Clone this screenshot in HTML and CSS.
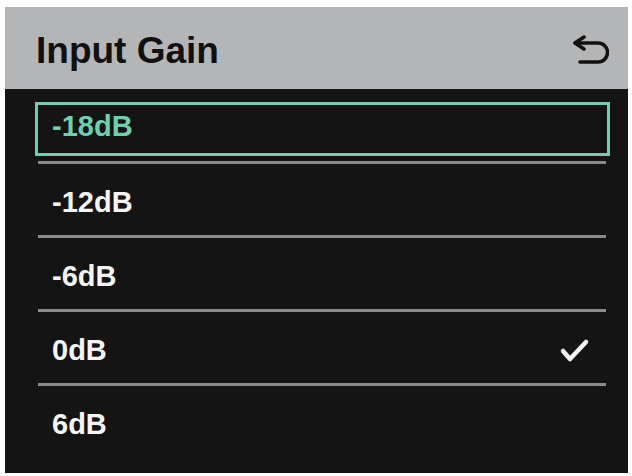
FILE: index.html
```html
<!DOCTYPE html>
<html lang="en">

<head>
    <meta charset="UTF-8">
    <meta name="viewport" content="width=device-width, initial-scale=1.0">
    <title>Input Gain</title>
    <link rel="stylesheet" href="styles.css">
</head>

<body>
    <div class="screen">
        <div class="header">
            <h1>Input Gain</h1>
            <svg class="back-icon" width="36" height="30" viewBox="0 0 36 30" fill="none" stroke="#111" stroke-width="3.5" stroke-linecap="round" stroke-linejoin="round">
                <path d="M11 3 L2 9 L11 15" />
                <path d="M2 9 H25 A9.5 9.5 0 0 1 25 28 H7" />
            </svg>
        </div>

        <div class="list">
            <div class="item selected">-18dB</div>
            <div class="divider"></div>
            <div class="item">-12dB</div>
            <div class="divider"></div>
            <div class="item">-6dB</div>
            <div class="divider"></div>
            <div class="item">0dB
                <svg class="check" width="32" height="26" viewBox="0 0 32 26" fill="none" stroke="#f2f2f2" stroke-width="4.5" stroke-linecap="round" stroke-linejoin="round">
                    <path d="M5 13 L12 21 L28 4" />
                </svg>
            </div>
            <div class="divider"></div>
            <div class="item">6dB</div>
        </div>
    </div>
</body>

</html>
```

FILE: styles.css
```css
* {
    margin: 0;
    padding: 0;
    box-sizing: border-box;
    font-family: 'Liberation Sans', Arial, sans-serif;
}

body {
    background-color: #ffffff;
    padding: 7px 4px 3px 5px;
}

.screen {
    width: 623px;
    height: 466px;
    background-color: #141414;
    display: flex;
    flex-direction: column;
    overflow: hidden;
}

.header {
    height: 82px;
    background-color: #b4b5b7;
    display: flex;
    align-items: center;
    justify-content: space-between;
    padding: 6px 19px 0 31px;
}

.header h1 {
    font-size: 37px;
    font-weight: bold;
    color: #111111;
}

.back-icon {
    margin-top: -4px;
}

.list {
    padding: 0 18px 0 30px;
}

.item {
    height: 71px;
    display: flex;
    align-items: center;
    padding: 5px 20px 0 17px;
    font-size: 29px;
    font-weight: bold;
    color: #f4f4f4;
}

.item.selected {
    height: 54px;
    margin: 13px 0 5px;
    padding: 0 20px 6px 14px;
    border: 3px solid #6ed0ad;
    color: #6ed0ad;
}

.check {
    margin-left: auto;
    margin-top: 2px;
}

.divider {
    height: 3px;
    margin: 0 4px 0 3px;
    background-color: #8a8a8a;
}
```
